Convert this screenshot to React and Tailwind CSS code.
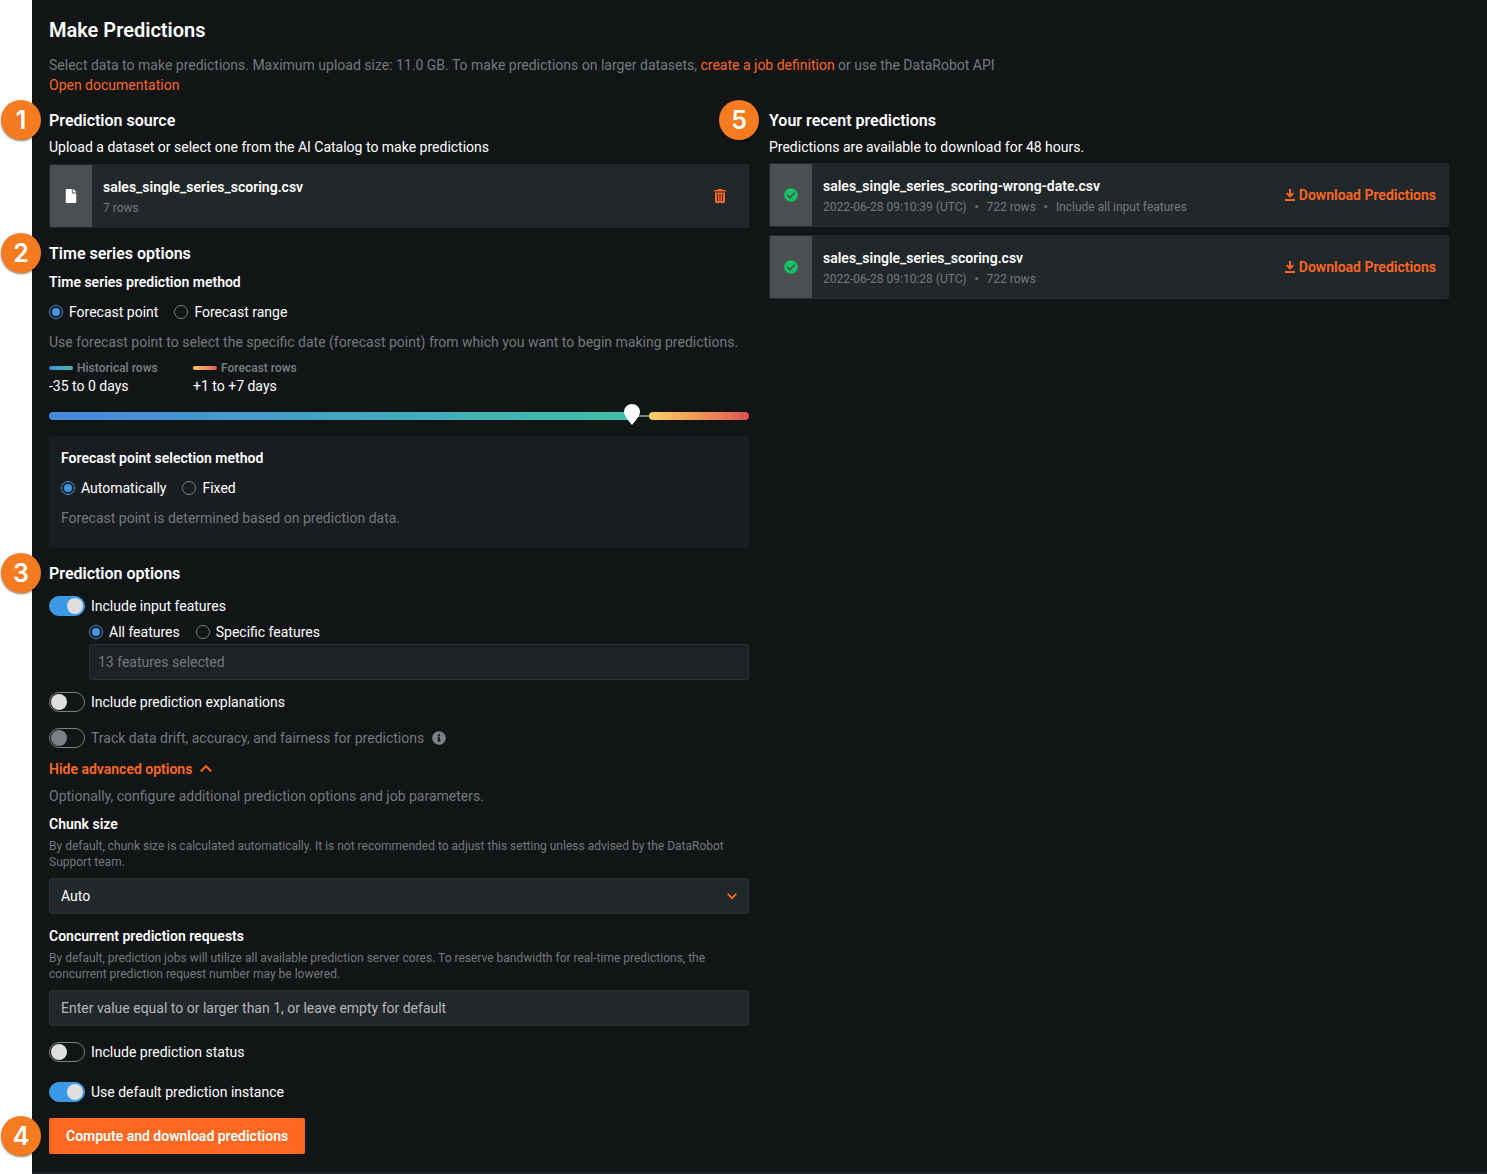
import { useState } from "react";
import { FaFile, FaCheckCircle, FaInfoCircle } from "react-icons/fa";

const recentPredictions = [
  {
    name: "sales_single_series_scoring-wrong-date.csv",
    details: ["2022-06-28 09:10:39 (UTC)", "722 rows", "Include all input features"],
  },
  {
    name: "sales_single_series_scoring.csv",
    details: ["2022-06-28 09:10:28 (UTC)", "722 rows"],
  },
];

function Badge({ number, className = "-left-12 -mt-[21px]" }) {
  return (
    <span
      className={`absolute top-1/2 flex size-10 items-center justify-center rounded-full bg-[#f47b20] font-[Inter,sans-serif] text-[25px] leading-none font-semibold text-white shadow-[0_1px_2px_rgba(0,0,0,0.5)] ${className}`}
    >
      {number}
    </span>
  );
}

function SectionTitle({ number, badgeClass, className = "", children }) {
  return (
    <div className={`relative ${className}`}>
      <Badge number={number} className={badgeClass} />
      <h2 className="text-base leading-5 font-semibold">{children}</h2>
    </div>
  );
}

function Radio({ name, value, current, onChange, children }) {
  return (
    <label className="flex cursor-pointer items-center gap-1.5">
      <input
        type="radio"
        name={name}
        value={value}
        checked={current === value}
        onChange={() => onChange(value)}
        className="flex size-3.5 appearance-none items-center justify-center rounded-full border border-[#7b8083] before:size-2 before:rounded-full checked:border-[#3b99e5] checked:before:bg-[#3b99e5]"
      />
      {children}
    </label>
  );
}

function Toggle({ checked, onChange, disabled = false, className = "", children }) {
  return (
    <label className={`flex items-center gap-1.5 ${disabled ? "text-[#747a7d]" : "cursor-pointer"} ${className}`}>
      <input
        type="checkbox"
        role="switch"
        checked={checked}
        disabled={disabled}
        onChange={(e) => onChange(e.target.checked)}
        className="flex h-5 w-9 shrink-0 appearance-none items-center rounded-full border border-[#7b8083] px-px before:size-4 before:rounded-full before:bg-[#dedede] checked:justify-end checked:border-[#3b99e5] checked:bg-[#3b99e5] disabled:before:bg-[#7b8083]"
      />
      {children}
    </label>
  );
}

function DownloadIcon() {
  return (
    <svg viewBox="0 0 10 12" className="h-3 w-2.5" fill="none" stroke="currentColor" aria-hidden="true">
      <path d="M5 0v7.5" strokeWidth="2" />
      <path d="M1.6 4.2L5 7.6l3.4-3.4" strokeWidth="1.8" />
      <path d="M0 11h10" strokeWidth="2" />
    </svg>
  );
}

function TrashIcon() {
  return (
    <svg viewBox="0 0 12 14" className="h-3.5 w-3" fill="currentColor" aria-hidden="true">
      <path d="M4 0h4v1h4v1.500H0V1h4z" />
      <path fillRule="evenodd" d="M1 3.500h10V13a1 1 0 0 1-1 1H2a1 1 0 0 1-1-1zM3 5v7h1V5zm2.500 0v7h1V5zM8 5v7h1V5z" />
    </svg>
  );
}

function FileCard({ icon, title, children, action }) {
  return (
    <div className="flex h-16 items-stretch overflow-hidden rounded-xs border border-[#24282a] bg-[#22272a]">
      <div className="flex w-[42px] shrink-0 items-center justify-center bg-[#4b4f52] text-sm">{icon}</div>
      <div className="flex min-w-0 flex-1 flex-col justify-center px-[11px] pt-[3px]">
        <p className="font-semibold">{title}</p>
        <p className="mt-px text-xs leading-5 text-[#747a7d]">{children}</p>
      </div>
      <div className="flex items-center px-3">{action}</div>
    </div>
  );
}

export default function App() {
  const [method, setMethod] = useState("point");
  const [selection, setSelection] = useState("auto");
  const [features, setFeatures] = useState("all");
  const [includeFeatures, setIncludeFeatures] = useState(true);
  const [explanations, setExplanations] = useState(false);
  const [status, setStatus] = useState(false);
  const [defaultInstance, setDefaultInstance] = useState(true);
  const [showAdvanced, setShowAdvanced] = useState(true);

  return (
    <div className="min-h-screen bg-white pl-8 font-[Roboto,sans-serif] text-sm leading-5 text-white">
      <main className="min-h-screen border-b-2 border-[#1f2326] bg-[#111516] pt-4 pr-[38px] pb-[18px] pl-[17px]">
        <h1 className="text-xl leading-7 font-semibold">Make Predictions</h1>
        <p className="mt-[11px] text-[#747a7d]">
          Select data to make predictions. Maximum upload size: 11.0 GB. To make predictions on larger datasets,{" "}
          <a href="#job-definition" className="text-[#ff6820]">create a job definition</a> or use the DataRobot API
        </p>
        <a href="#documentation" className="block w-fit text-[#ff6820]">Open documentation</a>

        <div className="mt-4 grid grid-cols-[700fr_680fr] items-start gap-5">
          <div>
            <section>
              <SectionTitle number={1}>Prediction source</SectionTitle>
              <p className="mt-1.5 mb-[7px]">Upload a dataset or select one from the AI Catalog to make predictions</p>
              <FileCard
                icon={<FaFile />}
                title="sales_single_series_scoring.csv"
                action={
                  <button type="button" aria-label="Remove dataset" className="mr-2.5 text-[#ff6820]">
                    <TrashIcon />
                  </button>
                }
              >
                7 rows
              </FileCard>
            </section>

            <section>
              <SectionTitle number={2} className="mt-4">Time series options</SectionTitle>
              <h3 className="mt-2 font-semibold">Time series prediction method</h3>
              <div className="mt-2.5 flex gap-4">
                <Radio name="method" value="point" current={method} onChange={setMethod}>Forecast point</Radio>
                <Radio name="method" value="range" current={method} onChange={setMethod}>Forecast range</Radio>
              </div>
              <p className="mt-2.5 text-[#747a7d]">
                Use forecast point to select the specific date (forecast point) from which you want to begin making predictions.
              </p>
              <div className="mt-2 flex">
                <div className="w-36">
                  <p className="flex items-center gap-1 text-xs leading-4 font-semibold text-[#747a7d]">
                    <span className="h-1 w-6 rounded-full bg-linear-to-r from-[#4a86dc] to-[#3fc0a5]" />
                    Historical rows
                  </p>
                  <p>-35 to 0 days</p>
                </div>
                <div>
                  <p className="flex items-center gap-1 text-xs leading-4 font-semibold text-[#747a7d]">
                    <span className="h-1 w-6 rounded-full bg-linear-to-r from-[#fad065] to-[#e0524f]" />
                    Forecast rows
                  </p>
                  <p>+1 to +7 days</p>
                </div>
              </div>
              <div className="mt-4 flex h-2 items-center">
                <div className="relative h-2 flex-[35] rounded-l-full bg-linear-to-r from-[#4a86dc] to-[#3fc0a5]">
                  <svg viewBox="0 0 16 21" className="absolute -top-2 -right-2 h-[21px] w-4" fill="#fff" aria-hidden="true">
                    <path d="M8 0a8 8 0 0 0-8 8c0 4 4.600 8.500 8 13 3.400-4.500 8-9 8-13a8 8 0 0 0-8-8z" />
                  </svg>
                </div>
                <div className="h-0.5 flex-1 bg-[#7b8083]" />
                <div className="h-2 flex-[6] rounded-full bg-linear-to-r from-[#fad065] to-[#e0524f]" />
              </div>
              <div className="mt-4 bg-[#191d20] px-3 pt-3 pb-5">
                <h3 className="font-semibold">Forecast point selection method</h3>
                <div className="mt-2.5 flex gap-4">
                  <Radio name="selection" value="auto" current={selection} onChange={setSelection}>Automatically</Radio>
                  <Radio name="selection" value="fixed" current={selection} onChange={setSelection}>Fixed</Radio>
                </div>
                <p className="mt-2.5 text-[#747a7d]">Forecast point is determined based on prediction data.</p>
              </div>
            </section>

            <section>
              <SectionTitle number={3} className="mt-4">Prediction options</SectionTitle>
              <Toggle className="mt-3" checked={includeFeatures} onChange={setIncludeFeatures}>Include input features</Toggle>
              <div className="pl-10">
                <div className="mt-1.5 flex gap-4">
                  <Radio name="features" value="all" current={features} onChange={setFeatures}>All features</Radio>
                  <Radio name="features" value="specific" current={features} onChange={setFeatures}>Specific features</Radio>
                </div>
                <input
                  type="text"
                  aria-label="Selected features"
                  placeholder="13 features selected"
                  disabled
                  className="mt-0.5 block h-9 w-full rounded-xs border border-[#2d3032] bg-[#1e2225] px-2 placeholder:text-[#747a7d]"
                />
              </div>
              <Toggle className="mt-3" checked={explanations} onChange={setExplanations}>Include prediction explanations</Toggle>
              <Toggle className="mt-4" checked={false} disabled>
                Track data drift, accuracy, and fairness for predictions
                <FaInfoCircle className="ml-0.5 size-3.5 text-[#7b8083]" />
              </Toggle>

              <button
                type="button"
                onClick={() => setShowAdvanced(!showAdvanced)}
                className="mt-[11px] flex items-center gap-2 font-semibold text-[#ff6820]"
              >
                {showAdvanced ? "Hide advanced options" : "Show advanced options"}
                <svg viewBox="0 0 12 8" className={`h-2 w-3 ${showAdvanced ? "" : "rotate-180"}`} fill="none" stroke="currentColor" strokeWidth="2" aria-hidden="true">
                  <path d="M0.800 6.400L6 1.200l5.200 5.200" />
                </svg>
              </button>

              {showAdvanced && (
                <>
                  <p className="mt-[7px] text-[#747a7d]">Optionally, configure additional prediction options and job parameters.</p>

                  <label htmlFor="chunk" className="mt-2 block font-semibold">Chunk size</label>
                  <p className="mt-1 text-xs leading-4 text-[#747a7d]">
                    By default, chunk size is calculated automatically. It is not recommended to adjust this setting unless advised by the DataRobot Support team.
                  </p>
                  <div className="relative mt-2">
                    <select id="chunk" className="block h-9 w-full appearance-none rounded-xs border border-[#2d3032] bg-[#22272a] px-[11px]">
                      <option>Auto</option>
                      <option>Fixed</option>
                      <option>Dynamic</option>
                    </select>
                    <svg viewBox="0 0 10 7" className="pointer-events-none absolute top-[15px] right-3 h-[7px] w-2.5 text-[#ff6820]" fill="none" stroke="currentColor" strokeWidth="1.700" aria-hidden="true">
                      <path d="M0.700 0.900L5 5.200l4.300-4.300" />
                    </svg>
                  </div>

                  <label htmlFor="concurrent" className="mt-3 block font-semibold">Concurrent prediction requests</label>
                  <p className="mt-1 text-xs leading-4 text-[#747a7d]">
                    By default, prediction jobs will utilize all available prediction server cores. To reserve bandwidth for real-time predictions, the concurrent prediction request number may be lowered.
                  </p>
                  <input
                    id="concurrent"
                    type="text"
                    placeholder="Enter value equal to or larger than 1, or leave empty for default"
                    className="mt-2 block h-9 w-full rounded-xs border border-[#2d3032] bg-[#22272a] px-[11px] placeholder:text-[#b5b8ba]"
                  />
                  <Toggle className="mt-4" checked={status} onChange={setStatus}>Include prediction status</Toggle>
                  <Toggle className="mt-5" checked={defaultInstance} onChange={setDefaultInstance}>Use default prediction instance</Toggle>
                </>
              )}
            </section>

            <div className="relative mt-4">
              <Badge number={4} className="-left-12 -mt-5" />
              <button type="button" className="block h-9 rounded-xs bg-[#ff6820] px-[17px] font-semibold">
                Compute and download predictions
              </button>
            </div>
          </div>

          <section>
            <SectionTitle number={5} badgeClass="-left-[50px] -mt-[21px]">Your recent predictions</SectionTitle>
            <p className="my-1.5">Predictions are available to download for 48 hours.</p>
            <div className="flex flex-col gap-2">
              {recentPredictions.map((item) => (
                <FileCard
                  key={item.name}
                  icon={<FaCheckCircle className="text-[#15c264]" />}
                  title={item.name}
                  action={
                    <button type="button" className="flex items-center gap-1 font-semibold text-[#ff6820]">
                      <DownloadIcon />
                      Download Predictions
                    </button>
                  }
                >
                  {item.details.map((detail, i) => (
                    <span key={detail}>
                      {i > 0 && <span className="mx-2">•</span>}
                      {detail}
                    </span>
                  ))}
                </FileCard>
              ))}
            </div>
          </section>
        </div>
      </main>
    </div>
  );
}
